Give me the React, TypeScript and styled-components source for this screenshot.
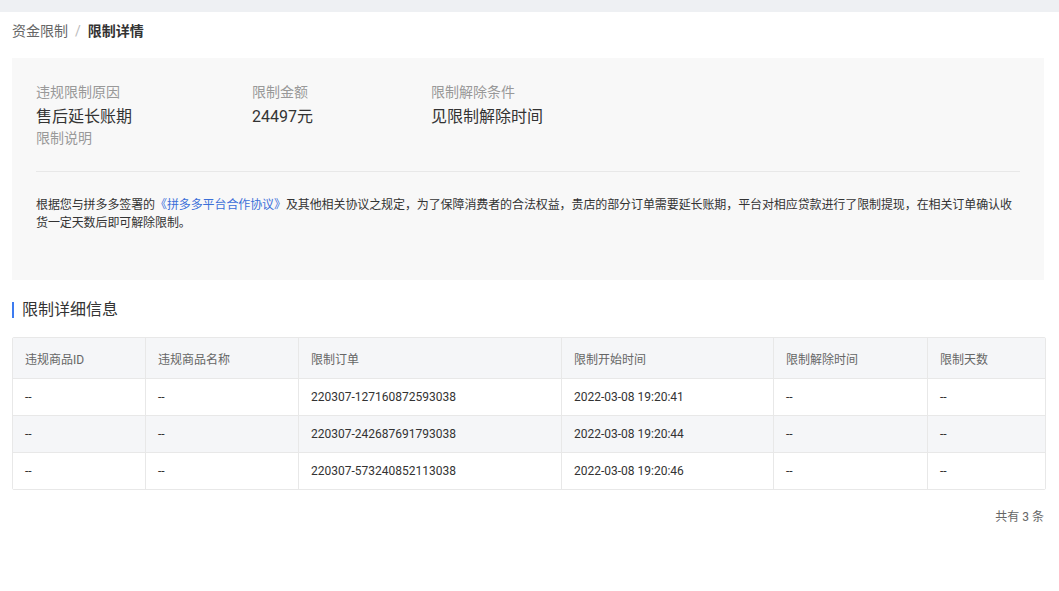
import React from "react";
import styled, { createGlobalStyle } from "styled-components";

const GlobalStyle = createGlobalStyle`
  html, body {
    margin: 0;
    padding: 0;
    background: #ffffff;
    font-family: Roboto, "Noto Sans CJK SC", sans-serif;
    color: #333333;
  }
`;

const TopBar = styled.div`
  height: 12px;
  background-color: #eef0f3;
`;

const Page = styled.div`
  padding: 0 15px 0 12px;
`;

const Breadcrumb = styled.div`
  display: flex;
  align-items: center;
  gap: 7px;
  height: 46px;
  padding-bottom: 8px;
  box-sizing: border-box;
  font-size: 14px;
  line-height: 20px;
`;

const Crumb = styled.span<{ $active?: boolean }>`
  color: ${(p) => (p.$active ? "#333333" : "#666666")};
  font-weight: ${(p) => (p.$active ? 700 : 400)};
`;

const Slash = styled.span`
  color: #bbbbbb;
`;

const InfoPanel = styled.div`
  background-color: #f8f8f8;
  padding: 24px 24px 48px;
`;

const InfoGrid = styled.div`
  display: grid;
  grid-template-columns: 216px 179px 1fr;
`;

const InfoItem = styled.div`
  display: flex;
  flex-direction: column;
`;

const Label = styled.div`
  font-size: 14px;
  line-height: 20px;
  color: #999999;
`;

const Value = styled.div`
  margin-top: 4px;
  font-size: 16px;
  line-height: 22px;
  color: #333333;
`;

const Divider = styled.div`
  height: 1px;
  background-color: #e8e8e8;
  margin: 23px 0 24px;
`;

const Notice = styled.p`
  margin: 0;
  font-size: 12px;
  line-height: 18px;
  letter-spacing: -0.1px;
  color: #333333;
`;

const Link = styled.a`
  color: #3b6fd8;
  text-decoration: none;
`;

const SectionTitle = styled.h3`
  margin: 18px 0 15px;
  display: flex;
  align-items: center;
  gap: 8px;
  font-size: 16px;
  font-weight: 400;
  line-height: 24px;
  color: #333333;

  &::before {
    content: "";
    width: 2px;
    height: 16px;
    background-color: #3d7bf0;
  }
`;

const Table = styled.table`
  width: 100%;
  table-layout: fixed;
  border-collapse: separate;
  border-spacing: 0;
  border: 1px solid #e8e8e8;
  border-radius: 2px;
  font-size: 12px;
`;

const HeadCell = styled.th`
  height: 40px;
  padding: 0 12px;
  text-align: left;
  font-weight: 400;
  color: #666666;
  background-color: #f5f6f8;
  border-right: 1px solid #e8e8e8;
  border-bottom: 1px solid #e8e8e8;

  &:last-child {
    border-right: none;
  }
`;

const Row = styled.tr<{ $striped: boolean }>`
  background-color: ${(p) => (p.$striped ? "#f5f6f8" : "#ffffff")};

  &:last-child td {
    border-bottom: none;
  }
`;

const Cell = styled.td`
  height: 36px;
  padding: 0 12px;
  color: #333333;
  border-right: 1px solid #e8e8e8;
  border-bottom: 1px solid #e8e8e8;

  &:last-child {
    border-right: none;
  }
`;

const Footer = styled.div`
  display: flex;
  justify-content: flex-end;
  margin-top: 18px;
  font-size: 12px;
  line-height: 18px;
  color: #666666;
`;

const columns = [
  { title: "违规商品ID", width: 133 },
  { title: "违规商品名称", width: 153 },
  { title: "限制订单", width: 263 },
  { title: "限制开始时间", width: 212 },
  { title: "限制解除时间", width: 154 },
  { title: "限制天数", width: 117 },
];

const rows = [
  { id: "--", name: "--", order: "220307-127160872593038", start: "2022-03-08 19:20:41", end: "--", days: "--" },
  { id: "--", name: "--", order: "220307-242687691793038", start: "2022-03-08 19:20:44", end: "--", days: "--" },
  { id: "--", name: "--", order: "220307-573240852113038", start: "2022-03-08 19:20:46", end: "--", days: "--" },
];

export default function App() {
  return (
    <>
      <GlobalStyle />
      <TopBar />
      <Page>
        <Breadcrumb>
          <Crumb>资金限制</Crumb>
          <Slash>/</Slash>
          <Crumb $active>限制详情</Crumb>
        </Breadcrumb>

        <InfoPanel>
          <InfoGrid>
            <InfoItem>
              <Label>违规限制原因</Label>
              <Value>售后延长账期</Value>
              <Label>限制说明</Label>
            </InfoItem>
            <InfoItem>
              <Label>限制金额</Label>
              <Value>24497元</Value>
            </InfoItem>
            <InfoItem>
              <Label>限制解除条件</Label>
              <Value>见限制解除时间</Value>
            </InfoItem>
          </InfoGrid>
          <Divider />
          <Notice>
            根据您与拼多多签署的<Link>《拼多多平台合作协议》</Link>
            及其他相关协议之规定，为了保障消费者的合法权益，贵店的部分订单需要延长账期，平台对相应贷款进行了限制提现，在相关订单确认收货一定天数后即可解除限制。
          </Notice>
        </InfoPanel>

        <SectionTitle>限制详细信息</SectionTitle>

        <Table>
          <colgroup>
            {columns.map((c) => (
              <col key={c.title} style={{ width: c.width }} />
            ))}
          </colgroup>
          <thead>
            <tr>
              {columns.map((c) => (
                <HeadCell key={c.title}>{c.title}</HeadCell>
              ))}
            </tr>
          </thead>
          <tbody>
            {rows.map((r, i) => (
              <Row key={r.order} $striped={i % 2 === 1}>
                <Cell>{r.id}</Cell>
                <Cell>{r.name}</Cell>
                <Cell>{r.order}</Cell>
                <Cell>{r.start}</Cell>
                <Cell>{r.end}</Cell>
                <Cell>{r.days}</Cell>
              </Row>
            ))}
          </tbody>
        </Table>

        <Footer>共有 3 条</Footer>
      </Page>
    </>
  );
}
